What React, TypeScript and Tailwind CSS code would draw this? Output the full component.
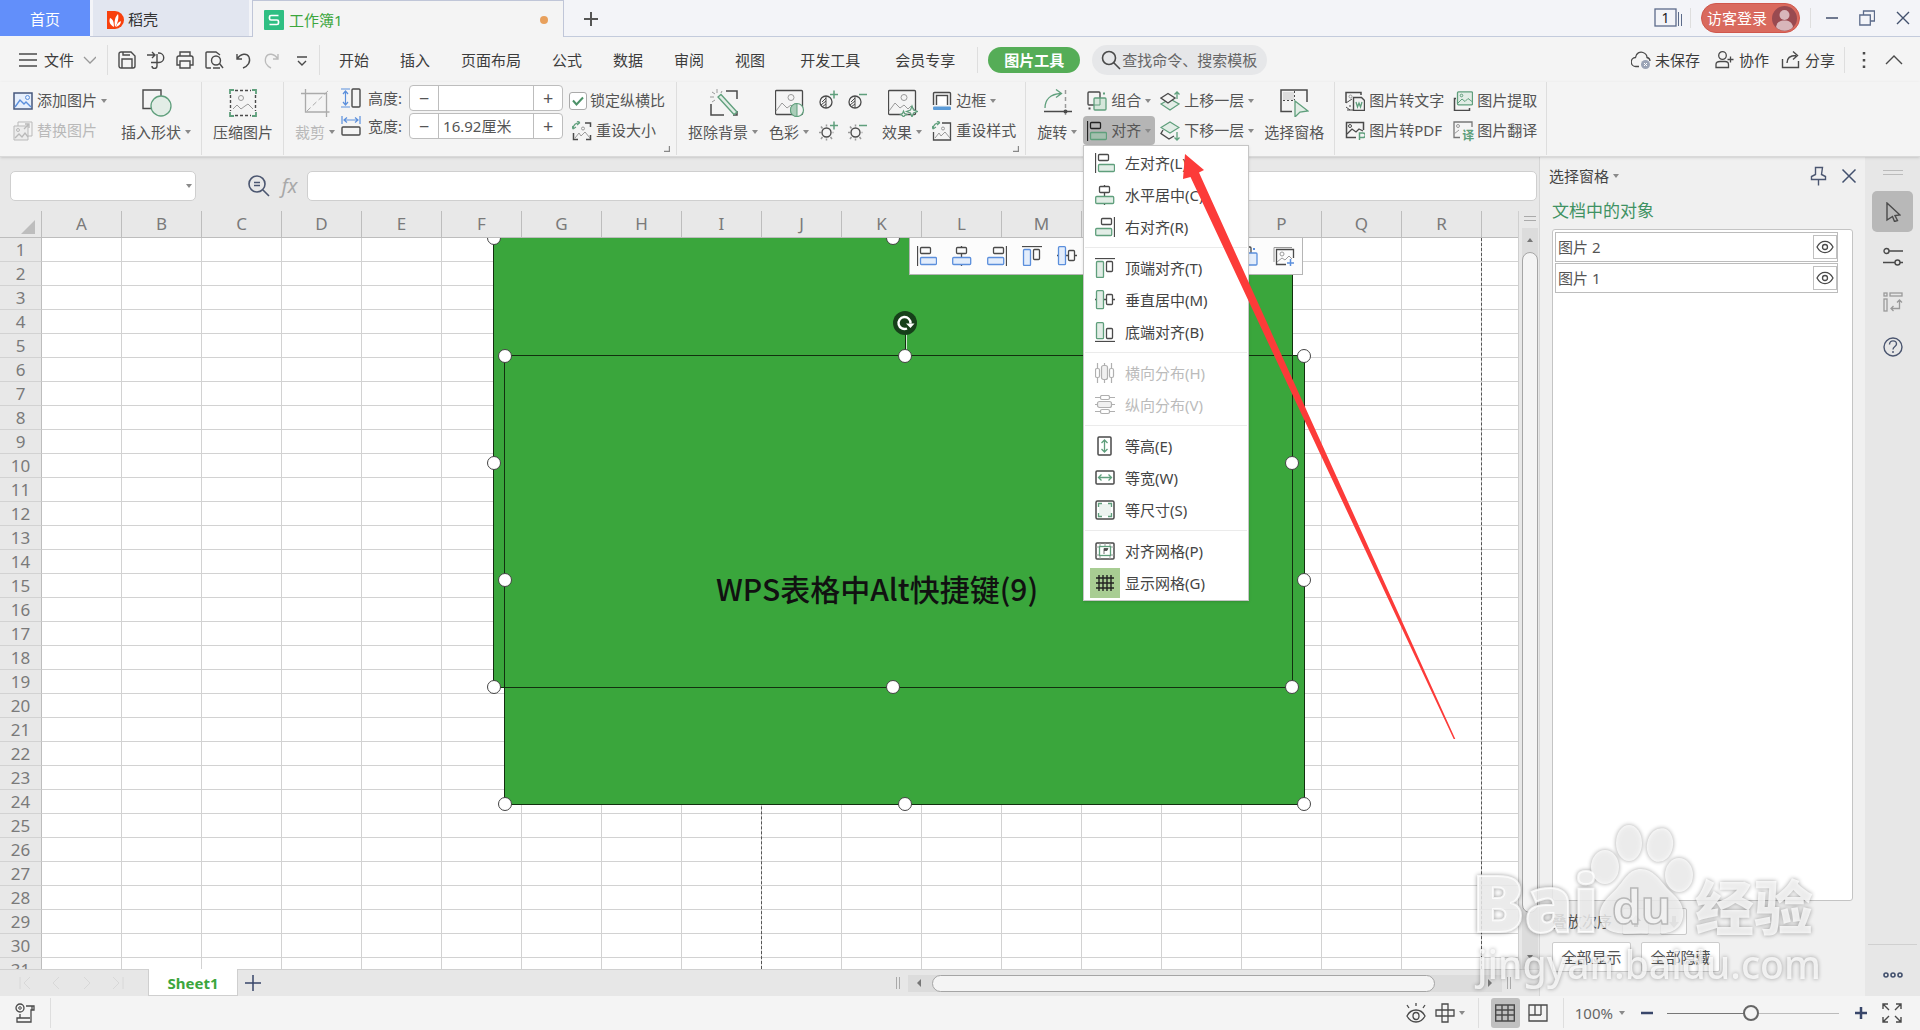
import React from "react";

type Kids = { children?: React.ReactNode };

const D = "#4a4a4a";
const G = "#5f9f7c";
const GF = "#e2ede6";
const L = "#9a9a9a";
const B = "#5b8fdc";

function Svg({ w = 20, h = 20, children }: Kids & { w?: number; h?: number }) {
  return (
    <svg width={w} height={h} viewBox={`0 0 ${w} ${h}`} fill="none" stroke={D} className="shrink-0" aria-hidden="true">
      {children}
    </svg>
  );
}

const Caret = () => (
  <svg width="8" height="4" viewBox="0 0 8 4" className="ml-[3px] shrink-0" aria-hidden="true">
    <path d="M1 0h6L4 4z" fill="#8a8a8a" />
  </svg>
);

const Rule = ({ className = "" }: { className?: string }) => <div className={`w-px shrink-0 bg-[#dedede] ${className}`} />;

function Big({ icon, label, caret, className = "" }: { icon: React.ReactNode; label: string; caret?: boolean; className?: string }) {
  return (
    <button className={`flex shrink-0 flex-col items-center pt-[7px] ${className}`}>
      {icon}
      <span className="mt-[5px] flex h-5 items-center">
        {label}
        {caret && <Caret />}
      </span>
    </button>
  );
}

function Small({ icon, label, caret, className = "" }: { icon: React.ReactNode; label: string; caret?: boolean; className?: string }) {
  return (
    <button className={`flex h-[29px] items-center gap-1 rounded ${className}`}>
      {icon}
      <span className="flex items-center">
        {label}
        {caret && <Caret />}
      </span>
    </button>
  );
}

const Stack = ({ children, className = "" }: Kids & { className?: string }) => (
  <div className={`flex shrink-0 flex-col gap-px pt-1 ${className}`}>{children}</div>
);

/* ---------- alignment icons ---------- */
type Tone = { a: string; b: string; f: string };
const GREEN: Tone = { a: D, b: G, f: GF };
const BLUE: Tone = { a: D, b: B, f: "#e3edfb" };

const AlignLeft = ({ t = GREEN }: { t?: Tone }) => (
  <Svg><path d="M.5 0v20" stroke={t.a} strokeWidth="1.300" /><rect x="3.500" y="1.500" width="10" height="6" rx="1" stroke={t.a} strokeWidth="1.300" /><rect x="3.500" y="11.500" width="16" height="7" rx="1" stroke={t.b} fill={t.f} strokeWidth="1.300" /></Svg>
);
const AlignCenter = ({ t = GREEN }: { t?: Tone }) => (
  <Svg><path d="M9.500 0v2M9.500 8v4M9.500 18v2" stroke={t.a} strokeWidth="1.300" /><rect x="4.500" y="1.500" width="10" height="6" rx="1" stroke={t.a} strokeWidth="1.300" /><rect x=".7" y="11.500" width="18" height="7" rx="1" stroke={t.b} fill={t.f} strokeWidth="1.300" /></Svg>
);
const AlignRight = ({ t = GREEN }: { t?: Tone }) => (
  <Svg><path d="M19.500 0v20" stroke={t.a} strokeWidth="1.300" /><rect x="6.500" y="1.500" width="10" height="6" rx="1" stroke={t.a} strokeWidth="1.300" /><rect x=".7" y="11.500" width="16" height="7" rx="1" stroke={t.b} fill={t.f} strokeWidth="1.300" /></Svg>
);
const AlignTop = ({ t = GREEN }: { t?: Tone }) => (
  <Svg><path d="M0 .5h20" stroke={t.a} strokeWidth="1.300" /><rect x="1.500" y="3.500" width="7" height="16" rx="1" stroke={t.b} fill={t.f} strokeWidth="1.300" /><rect x="11.500" y="3.500" width="6" height="10" rx="1" stroke={t.a} strokeWidth="1.300" /></Svg>
);
const AlignMiddle = ({ t = GREEN }: { t?: Tone }) => (
  <Svg><path d="M0 9.500h2M8 9.500h3M18 9.500h2" stroke={t.a} strokeWidth="1.300" /><rect x="1.500" y=".7" width="7" height="18" rx="1" stroke={t.b} fill={t.f} strokeWidth="1.300" /><rect x="11.500" y="4.500" width="6" height="10" rx="1" stroke={t.a} strokeWidth="1.300" /></Svg>
);
const AlignBottom = () => (
  <Svg><g strokeWidth="1.300"><path d="M0 19.500h20" /><rect x="1.500" y=".7" width="7" height="16" rx="1" stroke={G} fill={GF} /><rect x="11.500" y="6.500" width="6" height="10" rx="1" /></g></Svg>
);
const DistH = () => (
  <Svg><g stroke="#b0b0b0" strokeWidth="1.200"><path d="M2.500 0v5M2.500 14v6M9.500 0v3M9.500 17v3M16.500 0v5M16.500 14v6" /><rect x=".5" y="5.500" width="4" height="9" rx="1.500" /><rect x="6.500" y="2.500" width="6" height="14" rx="2" fill="#f0f0f0" /><rect x="14.500" y="5.500" width="4" height="9" rx="1.500" /></g></Svg>
);
const DistV = () => (
  <Svg><g stroke="#b0b0b0" strokeWidth="1.200"><path d="M0 2.500h5M14 2.500h6M0 9.500h3M17 9.500h3M0 16.500h5M14 16.500h6" /><rect x="5.500" y=".5" width="9" height="4" rx="1.500" /><rect x="2.500" y="6.500" width="14" height="6" rx="2" fill="#f0f0f0" /><rect x="5.500" y="14.500" width="9" height="4" rx="1.500" /></g></Svg>
);
const EqualH = () => (
  <Svg><rect x="3" y="1" width="13" height="18" rx="1" strokeWidth="1.500" /><path d="M9.500 4v12M6.500 7l3-3 3 3M6.500 13l3 3 3-3" stroke={G} strokeWidth="1.300" /></Svg>
);
const EqualW = () => (
  <Svg><rect x="1" y="3" width="18" height="13" rx="1" strokeWidth="1.500" /><path d="M3.500 9.500h13M6.500 6.500l-3 3 3 3M13.500 6.500l3 3-3 3" stroke={G} strokeWidth="1.300" /></Svg>
);
const EqualSize = () => (
  <Svg><rect x="1" y="1" width="18" height="18" rx="1.500" strokeWidth="1.500" /><rect x="4" y="4" width="12" height="12" fill="#edf4f0" stroke="none" /><path d="M3.500 7V3.500H7M13 3.500h3.500V7M16.500 13v3.500H13M7 16.500H3.500V13" stroke={G} strokeWidth="1.300" /></Svg>
);
const SnapGrid = () => (
  <Svg><rect x="1" y="2" width="18" height="16" rx="1" strokeWidth="1.500" /><path d="M1 6h18M1 14h18M5 2v16M10 2v3M15 2v16" stroke={L} /><rect x="4.500" y="5.500" width="11" height="9" stroke={G} fill="#fff" strokeWidth="1.300" /><path d="M9 13V7.500h4l-1 2H9" fill={D} strokeWidth=".8" /></Svg>
);
const ShowGrid = () => (
  <Svg><path d="M4 2v16M8 2v16M12 2v16M16 2v16M1 5h18M1 10h18M1 15h18" stroke="#222" strokeWidth="1.400" /></Svg>
);

/* ---------- ribbon icons ---------- */
const Photo = () => (
  <g><rect x=".5" y="1.500" width="27" height="24" rx="1" strokeWidth="1.300" /><circle cx="16" cy="8.500" r="3" stroke={L} /><path d="M1 22l6-8 5 5 4-3 4 4 3-3 4 4" stroke={L} /></g>
);
const ResetIcon = ({ solid = false }: { solid?: boolean }) => (
  <Svg><path d="M1 8c0-4 3-6.500 7-6.500M8 1.500L5 0M8 1.500L5 4M1 8l-1-3M1 8l3-2" stroke={G} strokeWidth="1.200" />{solid ? <path d="M10 2h8.500v17H1.500v-8" strokeWidth="1.300" /> : <path d="M13 2h5.500v4M18.500 14v4.500H14M6 18.500H1.500V12" strokeWidth="1.500" />}<circle cx="11" cy="7.500" r="1.500" stroke={L} /><path d="M3 17l4-5 2 3 4-4 5 6" stroke={L} /></Svg>
);
const Contrast = ({ plus }: { plus?: boolean }) => (
  <Svg w={19}><circle cx="7" cy="12" r="6" strokeWidth="1.300" /><path d="M7 6v12M7 8l-4 4M7 11l-5 4M7 14l-4 3" /><path d={plus ? "M11 4.500h8M15 .5v8" : "M11 4.500h8"} stroke={G} strokeWidth="1.500" /></Svg>
);
const Sun = ({ plus }: { plus?: boolean }) => (
  <Svg w={19}><circle cx="7.500" cy="11.500" r="4.500" strokeWidth="1.400" /><path d="M2 5.500l1.500 2M7.500 3.500v2M0 11.500h2M2 18l1.500-2M7.500 17.500v2M13 18l-1.500-2M13.500 11.500h1" stroke={L} strokeWidth="1.500" /><path d={plus ? "M11 4.500h8M15 .5v8" : "M11 4.500h8"} stroke={G} strokeWidth="1.500" /></Svg>
);
const Layers = ({ up }: { up?: boolean }) =>
  up ? (
    <Svg><path d="M1 13l9-5 9 5-9 6z" stroke={G} fill={GF} strokeWidth="1.200" /><path d="M1 7l7-4.500L15 7l-7 5z" fill="#f3f3f3" strokeWidth="1.400" /><path d="M17 8V1M14.500 3.500L17 1l2.500 2.500" stroke={G} strokeWidth="1.300" /></Svg>
  ) : (
    <Svg><path d="M3 9l-2 3.500L9 18l5-3" strokeWidth="1.400" /><path d="M1 6.500L10 1l9 5.500-9 5.500z" stroke={G} fill={GF} strokeWidth="1.200" /><path d="M17 11v8M14.500 16.500L17 19l2.500-2.500" stroke={G} strokeWidth="1.300" /></Svg>
  );

const Convert = ({ kind }: { kind: "word" | "pdf" | "extract" | "trans" }) => {
  if (kind === "word")
    return <Svg><path d="M1 12V1.500h15V4" strokeWidth="1.500" /><circle cx="5.500" cy="5.500" r="1.500" stroke={L} /><path d="M1 12l6-4M1 16l4 3M2 19h6M5 16v-2" /><path d="M8.500 6.500h8l3 3v10h-11z" fill="#f3f3f3" strokeWidth="1.400" /><path d="M11 11l1.500 5 1.500-4 1.500 4 1.500-5" stroke={G} strokeWidth="1.300" /></Svg>;
  if (kind === "pdf")
    return <Svg><path d="M11 16.500H1.500v-15h17V9" strokeWidth="1.500" /><circle cx="5" cy="5" r="1.500" /><path d="M2 13l5-5 4 3 3-3 4 2" strokeWidth="1.300" /><path d="M14.500 19v-7h3.500a2 2 0 010 4.500h-3.500" stroke={G} strokeWidth="1.500" /></Svg>;
  if (kind === "extract")
    return <Svg><path d="M3 7.500H1.500v12h15V17" strokeWidth="1.500" /><rect x="4.500" y=".8" width="15" height="13" rx="1" stroke={G} fill={GF} strokeWidth="1.300" /><circle cx="8.500" cy="4.500" r="1.300" stroke={G} /><path d="M5 12l4-4 3 2.500 3-3 4 3" stroke={G} /></Svg>;
  return (
    <span className="relative block h-5 w-5 shrink-0">
      <Svg><path d="M7 16.500H1V1h18v5" stroke="#777" strokeWidth="1.300" /><circle cx="5" cy="5" r="1.500" stroke={L} /><path d="M1 13l5-4" stroke={L} /></Svg>
      <span className="absolute -right-px -bottom-px text-xs leading-3 font-bold text-[#5f9f7c]">译</span>
    </span>
  );
};

function Stepper({ id, value }: { id: string; value: string }) {
  return (
    <div className="flex h-[26px] w-[154px] overflow-hidden rounded-[4px] border border-[#bdbdbd] bg-white">
      <button aria-label="减小" className="w-7 shrink-0 text-center text-lg leading-6 text-[#555]">−</button>
      <input id={id} defaultValue={value} className="min-w-0 flex-1 border-x border-[#bdbdbd] px-1 text-[15px] text-[#555] outline-none" />
      <button aria-label="增大" className="w-7 shrink-0 text-center text-lg leading-6 text-[#555]">+</button>
    </div>
  );
}

/* ---------- title bar ---------- */
function TitleBar() {
  return (
    <header className="flex h-[37px] shrink-0 bg-[#f3f4f8] text-[15px]">
      <button className="mb-px w-[90px] bg-[#628ffa] pt-[3px] text-white">首页</button>
      <div className="w-[3px] border-b border-[#c3c9d9]" />
      <button className="flex w-[156px] items-center gap-1 border-b border-[#c3c9d9] bg-[#e2e6f0] pt-[3px] pl-[13px] text-[#333]">
        <Svg w={18}><path d="M1 1h8a9 9 0 010 18H1z" fill="#f8400d" stroke="none" /><path d="M8 17C3 14 3 11 4 8c3 1 4 4 4 9zM9 17c-1-6 0-10 3-13 1 3 0 9-3 13zM10 17c1-4 3-5 5-6 0 3-2 5-5 6z" fill="#fff" stroke="none" /></Svg>
        稻壳
      </button>
      <div className="w-[3px] border-b border-[#c3c9d9]" />
      <button className="flex w-[312px] items-center gap-[5px] border border-b-0 border-[#c0c6d8] bg-[#f4f4f4] pt-[2px] pl-[11px] text-[#3ca63d]">
        <Svg><rect width="20" height="20" rx="1" fill="#2fbf83" stroke="none" /><path d="M14.500 5.500H7a1.500 1.500 0 00-1.500 1.500v1.500A1.500 1.500 0 007 10h6a1.500 1.500 0 011.500 1.500V13a1.500 1.500 0 01-1.500 1.500H5.500" stroke="#fff" strokeWidth="1.700" /></Svg>
        工作簿1
        <span className="mr-[15px] ml-auto h-2 w-2 rounded-full bg-[#e8a05c]" />
      </button>
      <div className="flex flex-1 items-center border-b border-[#c3cbdc] pl-[19px]">
        <button aria-label="新建" className="pt-[2px]"><Svg w={16} h={16}><path d="M8 1v14M1 8h14" stroke="#555" strokeWidth="2" /></Svg></button>
        <div className="ml-auto flex items-center pr-[9px]">
          <Svg w={28}><rect x="1" y="1" width="21" height="17" stroke="#5c6b8a" strokeWidth="1.300" /><path d="M24.500 4v14M27.500 6v12" stroke="#5c6b8a" /><text x="11.500" y="15" fontSize="14" textAnchor="middle" fill="#222" stroke="none">1</text></Svg>
          <Rule className="mx-[8px] h-5" />
          <button className="ml-[2px] flex h-[30px] w-[99px] items-center justify-between rounded-full border border-[#d0574c] bg-[#d96a5e] pr-[2px] pl-[5px] text-white">
            访客登录
            <svg width="25" height="25" viewBox="0 0 25 25" aria-hidden="true"><circle cx="12.500" cy="12.500" r="12.500" fill="#994a50" /><circle cx="12.500" cy="9" r="5" fill="#d8b6ba" /><path d="M4 21c1-5 4-6.500 8.500-6.500S20 16 21 21c-4 5-13 5-17 0z" fill="#d8b6ba" /></svg>
          </button>
          <Rule className="mx-[10px] h-5" />
          <button aria-label="最小化" className="ml-[3px]"><Svg w={16} h={16}><path d="M2 8h12" stroke="#43516e" strokeWidth="1.500" /></Svg></button>
          <button aria-label="还原" className="ml-[19px]"><Svg w={16} h={16}><path d="M4.500 5V1h11v10h-4M.8 5h10.500v10H.8z" stroke="#5c6b8a" strokeWidth="1.300" /></Svg></button>
          <button aria-label="关闭" className="ml-5"><Svg w={16} h={16}><path d="M2 2l12 12M14 2L2 14" stroke="#43516e" strokeWidth="1.400" /></Svg></button>
        </div>
      </div>
    </header>
  );
}

const QUICK: [string, React.ReactNode][] = [
  ["保存", <Svg w={18} h={18} key="s"><path d="M1 3a2 2 0 012-2h10l4 4v10a2 2 0 01-2 2H3a2 2 0 01-2-2z" strokeWidth="1.400" /><path d="M5 1v3h7M4 17V8h10v9" strokeWidth="1.400" /></Svg>],
  ["输出", <Svg w={18} h={18} key="o"><path d="M0 4h8M5 1l3 3-3 3M11 2h1a4.500 4.500 0 010 9.500H4M10 3v12a2.500 2.500 0 01-5 0" strokeWidth="1.400" /></Svg>],
  ["打印", <Svg w={18} h={18} key="p"><path d="M4 5V1h10v4M4 14H1V7a2 2 0 012-2h12a2 2 0 012 2v7h-3M4 10h10v7H4z" strokeWidth="1.400" /></Svg>],
  ["预览", <Svg w={19} h={18} key="v"><path d="M6 17H2a1 1 0 01-1-1V2a1 1 0 011-1h9l4 3M8 17h7" strokeWidth="1.400" /><circle cx="11" cy="9.500" r="4.500" strokeWidth="1.400" /><path d="M14.500 12.500L18 17" strokeWidth="1.400" /></Svg>],
];

const TABS = ["开始", "插入", "页面布局", "公式", "数据", "审阅", "视图"];

function MenuBar() {
  return (
    <nav className="flex h-[45px] shrink-0 items-center bg-[#f4f4f4] pt-px pr-[17px] pl-[19px] text-[15px] text-[#3c3c3c]">
      <button className="flex items-center">
        <Svg w={18} h={14}><path d="M0 1h18M0 7h18M0 13h18" strokeWidth="1.500" /></Svg>
        <span className="ml-[7px]">文件</span>
        <Svg w={22} h={8}><path d="M10 1l6 6 6-6" stroke="#999" strokeWidth="1.300" /></Svg>
      </button>
      <Rule className="ml-[11px] h-[30px]" />
      <div className="ml-[10px] flex items-center gap-[11px]">
        {QUICK.map(([n, i]) => <button key={n} aria-label={n}>{i}</button>)}
        <button aria-label="撤销"><Svg w={18} h={18}><path d="M2 3v5h5M2 8c4-6 10-6 12-2 2 5-1 9-6 11" strokeWidth="1.400" /></Svg></button>
        <button aria-label="恢复"><Svg w={18} h={18}><path d="M14 3v5H9M14 8C10 2 4 2 2 6c-2 5 1 9 5 11" stroke="#bbb" strokeWidth="1.400" /></Svg></button>
        <button aria-label="更多"><Svg w={18} h={18}><path d="M4 6h10M5 10l4 4 4-4" strokeWidth="1.400" /></Svg></button>
      </div>
      <Rule className="ml-[8px] h-[30px]" />
      <div className="ml-[19px] flex gap-[31px]">
        {TABS.map((t) => <button key={t}>{t}</button>)}
      </div>
      <div className="ml-[35px] flex gap-[35px]">
        <button>开发工具</button>
        <button>会员专享</button>
      </div>
      <Rule className="ml-[22px] h-[26px]" />
      <button className="ml-[10px] h-[26px] w-[92px] rounded-full bg-[#55ad57] font-bold text-white">图片工具</button>
      <label className="ml-3 flex h-[30px] w-[175px] items-center rounded-full bg-[#e6e7e9] pl-[9px]">
        <Svg><circle cx="8" cy="8" r="6.500" strokeWidth="1.600" /><path d="M12.500 12.500L19 19" strokeWidth="1.600" /></Svg>
        <input aria-label="搜索" placeholder="查找命令、搜索模板" className="w-[140px] bg-transparent pl-px outline-none placeholder:text-[#666] placeholder:opacity-100" />
      </label>
      <div className="ml-auto flex items-center">
        <button className="flex items-center gap-1">
          <Svg><path d="M8 16.500H5a4.500 4.500 0 01-.5-9C5 3 9 1.500 12 2.500s4 3 4 5c2 .5 3 2 3 3.500" strokeWidth="1.300" /><circle cx="14.500" cy="14.500" r="4.500" fill="#9aa3b5" stroke="none" /><path d="M13 13l3 3M16 13l-3 3" stroke="#fff" /></Svg>未保存
        </button>
        <button className="ml-[15px] flex items-center gap-1">
          <Svg><circle cx="7.500" cy="5.500" r="3.800" strokeWidth="1.300" /><path d="M1 17.500v-3c0-2 1.500-3 4-3h5c2 0 3.500 1 3.500 3v3zM12.500 9.500h6M15.500 6.500v6" strokeWidth="1.300" /></Svg>协作
        </button>
        <button className="ml-3 flex items-center gap-1">
          <Svg><path d="M1.500 9v8.500h16V11" strokeWidth="1.400" /><path d="M6 13c0-5 3-7.500 9-7.500M12 1.500l4.500 4-4.500 4" strokeWidth="1.400" /></Svg>分享
        </button>
        <Rule className="ml-[9px] h-[26px]" />
        <button aria-label="更多选项" className="ml-[14px]"><Svg w={10}><path d="M5 2v2.500M5 9v2.500M5 15.500V18" strokeWidth="2.500" /></Svg></button>
        <button aria-label="收起功能区" className="ml-4"><Svg w={18} h={10}><path d="M1 9l8-8 8 8" strokeWidth="1.400" /></Svg></button>
      </div>
    </nav>
  );
}

const Launcher = () => (
  <button aria-label="更多设置" className="absolute right-[6px] bottom-[4px]"><Svg w={6} h={6}><path d="M5.500 0v5.500H0" stroke="#888" strokeWidth="1.400" /></Svg></button>
);

/* ---------- ribbon ---------- */
function Ribbon() {
  return (
    <section className="relative z-10 flex h-[75px] shrink-0 border-b border-[#d9d9d9] bg-[#f4f4f4] pl-[13px] text-[15px] whitespace-nowrap text-[#555] shadow-sm">
      <Stack>
        <Small caret label="添加图片" icon={<Svg><rect x="1" y="2" width="18" height="16" fill="#e6effc" stroke="#45577c" strokeWidth="1.500" /><circle cx="14.500" cy="6.500" r="2" stroke={B} /><path d="M2 16l5-7 4 4 2-2 5 5" stroke={B} strokeWidth="1.400" /></Svg>} />
        <Small className="text-[#b9b9b9]" label="替换图片" icon={<Svg><g stroke="#b9b9b9"><path d="M5 5V1h14v14h-4" /><path d="M1 5h14v14H1z" fill="#ececec" /><circle cx="5" cy="9" r="1.500" /><path d="M2 17l4-4 3 3 3-4 3 4M11 8l5-5M12 3h4v4" strokeWidth="1.300" /></g></Svg>} />
      </Stack>
      <Big className="ml-[13px]" caret label="插入形状" icon={<Svg w={30} h={28}><path d="M9 19.500H1V1h18v6" strokeWidth="1.400" /><circle cx="19" cy="17" r="10" stroke={G} fill={GF} strokeWidth="1.300" /></Svg>} />
      <Rule className="ml-[9px] h-[73px]" />
      <Big className="ml-[11px]" label="压缩图片" icon={<Svg w={28} h={28}><path d="M6 1.500h16M6 26.500h16M1.500 6v16M26.500 6v16" strokeDasharray="3 2" strokeWidth="1.400" /><path d="M1 5V1h4M23 1h4v4M27 23v4h-4M5 27H1v-4" stroke={G} strokeWidth="1.800" /><circle cx="12" cy="9" r="2.500" stroke={L} /><path d="M4 20l4-4 4 4 4-3 3-2 5 5" stroke={L} /></Svg>} />
      <Rule className="ml-[10px] h-[73px]" />
      <Big className="ml-[11px] text-[#b9b9b9]" caret label="裁剪" icon={<Svg w={30} h={28}><g stroke="#aaa"><path d="M0 4.500h26M4.500 0v23h24M25.500 4v24" strokeWidth="1.300" /><path d="M6 22L29 0" strokeDasharray="5 3" /></g></Svg>} />
      <div className="ml-[5px] flex shrink-0 flex-col gap-[2px] pt-[3px]">
        <div className="flex items-center">
          <Svg><path d="M0 1h9M0 19h9M4.500 3v14M2 6l2.500-3L7 6M2 14l2.500 3L7 14" stroke={B} strokeWidth="1.200" /><rect x="11" y="1" width="8" height="18" rx="1" strokeWidth="1.400" /></Svg>
          <label htmlFor="pic-h" className="w-[41px] pl-[7px]">高度:</label>
          <span className="ml-[7px]"><Stepper id="pic-h" value="" /></span>
        </div>
        <div className="flex items-center">
          <Svg><path d="M1 0v8M19 0v8M3 4h14M6 1.500L3 4l3 2.500M14 1.500L17 4l-3 2.500" stroke={B} strokeWidth="1.200" /><rect x="1" y="11" width="18" height="8" rx="1" strokeWidth="1.400" /></Svg>
          <label htmlFor="pic-w" className="w-[41px] pl-[7px]">宽度:</label>
          <span className="ml-[7px]"><Stepper id="pic-w" value="16.92厘米" /></span>
        </div>
      </div>
      <div className="relative flex shrink-0 pr-[11px]">
        <Stack className="ml-[6px]">
          <label className="flex h-[29px] items-center gap-[3px]">
            <span className="relative h-[18px] w-[18px]">
              <input type="checkbox" defaultChecked className="peer block h-[18px] w-[18px] appearance-none rounded-[3px] border border-[#aaa] bg-white" />
              <svg viewBox="0 0 18 18" fill="none" className="pointer-events-none absolute inset-0 hidden peer-checked:block" aria-hidden="true"><path d="M4 8.500l3.500 4L14 5.500" stroke="#4c9168" strokeWidth="2" /></svg>
            </span>
            锁定纵横比
          </label>
          <Small className="pl-[3px]" label="重设大小" icon={<ResetIcon />} />
        </Stack>
        <Launcher />
      </div>
      <Rule className="h-[73px]" />
      <Big className="ml-[11px]" caret label="抠除背景" icon={<Svg w={28} h={28}><path d="M16 2h11v8M1 15v11h13M27 22v4h-4" strokeWidth="1.500" /><path d="M8 8l3-2.500L27 23l-3 2.500z" stroke={G} fill={GF} strokeWidth="1.300" /><path d="M7 0v4M2 3l3 2M0 8h4M2 13l3-2M12 2l-1 2" stroke={L} /></Svg>} />
      <Big className="ml-[10px]" caret label="色彩" icon={<Svg w={30} h={28}><Photo /><circle cx="22" cy="21" r="6.500" fill="#f4f4f4" stroke={G} strokeWidth="1.200" /><path d="M22 14.500a6.500 6.500 0 000 13z" fill="#a9cdb8" stroke={G} /></Svg>} />
      <div className="ml-[9px] grid shrink-0 grid-cols-2 content-start gap-x-[10px] gap-y-[11px] pt-2">
        <button aria-label="增加对比度"><Contrast plus /></button>
        <button aria-label="降低对比度"><Contrast /></button>
        <button aria-label="增加亮度"><Sun plus /></button>
        <button aria-label="降低亮度"><Sun /></button>
      </div>
      <Big className="ml-[15px]" caret label="效果" icon={<Svg w={30} h={28}><Photo /><path d="M24 17l1.500 4 4 1.500-4 1.500-1.500 4-1.500-4-4-1.500 4-1.500zM15.500 22l1 2.500 2.500 1-2.500 1-1 2-1-2-2-1 2-1z" fill="#f4f4f4" stroke={G} strokeWidth="1.200" /></Svg>} />
      <div className="relative flex shrink-0 pr-[9px]">
        <Stack className="ml-[9px]">
          <Small caret label="边框" icon={<Svg><rect x="1.500" y="1.500" width="17" height="14" rx="1" strokeWidth="1.400" /><rect x="4.500" y="4.500" width="11" height="11" fill="#fff" strokeWidth="1.400" /><rect x="0" y="14" width="20" height="6" fill="#f4f4f4" stroke="none" /><rect x="1" y="15.500" width="18" height="3.500" rx="1" fill="#5b9bd8" stroke="none" /></Svg>} />
          <Small label="重设样式" icon={<ResetIcon solid />} />
        </Stack>
        <Launcher />
      </div>
      <Rule className="h-[73px]" />
      <Big className="ml-[11px]" caret label="旋转" icon={<Svg w={28} h={28}><path d="M1 19C1 11 6 5 17 4.500M12 .5l5.500 4-5.500 4" stroke={G} strokeWidth="1.300" /><path d="M0 22.500h28" strokeWidth="1.500" /><path d="M21.500 1v28" stroke={L} strokeDasharray="4 3" strokeWidth="1.500" /><circle cx="21.500" cy="22.500" r="2" fill={D} stroke="none" /></Svg>} />
      <Stack className="ml-[5px]">
        <Small className="w-[72px] pl-1" caret label="组合" icon={<Svg><rect x="1" y="1" width="12" height="13" rx="1" strokeWidth="1.400" /><rect x="7" y="7" width="12" height="12" rx="1" stroke={G} fill="#d5e6db" strokeWidth="1.300" /><path d="M7 14h6V7" stroke={G} /><path d="M16 2.500h2" stroke={G} strokeWidth="2" /><path d="M1.500 17.500h2" strokeWidth="2" /></Svg>} />
        <Small className="w-[72px] bg-[#b5b5b5] pl-1" caret label="对齐" icon={<AlignLeft t={{ a: "#222", b: G, f: "#a3bfae" }} />} />
      </Stack>
      <Stack className="ml-[5px]">
        <Small caret label="上移一层" icon={<Layers up />} />
        <Small caret label="下移一层" icon={<Layers />} />
      </Stack>
      <Big className="ml-[9px]" label="选择窗格" icon={<Svg w={29} h={28}><path d="M12 22.500H1V1h26v12" strokeWidth="1.500" /><path d="M3 3h11v8H3z" fill="#ddd" stroke="none" /><path d="M14.500 2v9M3 11.500h11" strokeDasharray="2 2" /><path d="M15 12l13 10-8 1-5 5z" stroke={G} fill={GF} strokeWidth="1.300" /></Svg>} />
      <Rule className="ml-[10px] h-[73px]" />
      <Stack className="ml-[10px]">
        <Small label="图片转文字" icon={<Convert kind="word" />} />
        <Small label="图片转PDF" icon={<Convert kind="pdf" />} />
      </Stack>
      <Stack className="ml-[9px]">
        <Small label="图片提取" icon={<Convert kind="extract" />} />
        <Small label="图片翻译" icon={<Convert kind="trans" />} />
      </Stack>
      <Rule className="ml-[9px] h-[73px]" />
      <AlignMenu />
    </section>
  );
}

const MENU: [React.ReactNode, string, string?][][] = [
  [[<AlignLeft />, "左对齐(L)"], [<AlignCenter />, "水平居中(C)"], [<AlignRight />, "右对齐(R)"]],
  [[<AlignTop />, "顶端对齐(T)"], [<AlignMiddle />, "垂直居中(M)"], [<AlignBottom />, "底端对齐(B)"]],
  [[<DistH />, "横向分布(H)", "off"], [<DistV />, "纵向分布(V)", "off"]],
  [[<EqualH />, "等高(E)"], [<EqualW />, "等宽(W)"], [<EqualSize />, "等尺寸(S)"]],
  [[<SnapGrid />, "对齐网格(P)"], [<ShowGrid />, "显示网格(G)", "on"]],
];

function AlignMenu() {
  return (
    <div role="menu" className="absolute top-[63px] left-[1083px] w-[166px] border border-[#c6c6c6] bg-white pt-px pb-px text-[15px] text-[#444] shadow-sm">
      {MENU.map((group, g) => (
        <div key={g}>
          {g > 0 && <div className="mx-px my-1 h-px bg-[#ebebeb]" />}
          {group.map(([icon, label, state]) => (
            <button key={label} role="menuitem" disabled={state === "off"} className="flex h-8 w-full items-center pl-[6px] disabled:text-[#bbb]">
              <span className={state === "on" ? "flex h-[30px] w-[30px] items-center justify-center bg-[#a8cd93]" : "flex h-[30px] w-[30px] items-center justify-center"}>{icon}</span>
              <span className="ml-[5px]">{label}</span>
            </button>
          ))}
        </div>
      ))}
    </div>
  );
}

/* ---------- sheet ---------- */
function FormulaBar() {
  return (
    <div className="flex h-[54px] shrink-0 items-center pt-1 pr-[2px] pl-[10px]">
      <div className="flex h-[30px] w-[186px] items-center rounded-[5px] border border-[#cfcfcf] bg-white pr-[2px]">
        <input aria-label="名称框" className="min-w-0 flex-1 bg-transparent px-2 outline-none" />
        <Caret />
      </div>
      <button aria-label="函数查找" className="ml-[52px]"><Svg w={22} h={22}><circle cx="9" cy="9" r="8" stroke="#4b5670" strokeWidth="1.600" /><path d="M15 15l6 6M6 7.500h6M6 10.500h6" stroke="#4b5670" strokeWidth="1.600" /></Svg></button>
      <button className="ml-[10px] w-[19px] font-['Noto_Sans'] text-xl leading-6 text-[#a8a8a8] italic">fx</button>
      <input aria-label="编辑栏" className="ml-2 h-[30px] min-w-0 flex-1 rounded-[5px] border border-[#cfcfcf] bg-white px-2 outline-none" />
    </div>
  );
}

const COLS = "ABCDEFGHIJKLMNOPQR".split("").concat("");
const ROWS = Array.from({ length: 31 }, (_, i) => i + 1);

const Handle = ({ className }: { className: string }) => (
  <span className={`absolute h-[14px] w-[14px] -translate-x-1/2 -translate-y-1/2 rounded-full border border-[#444] bg-white ${className}`} />
);

function Grid() {
  return (
    <div className="relative min-w-0 flex-1 overflow-hidden border-r border-[#cfcfcf] bg-white">
      <table className="w-[1562px] table-fixed border-separate border-spacing-0 text-[17px] text-[#7a7a7a]">
        <thead>
          <tr className="h-[27px]">
            <th className="w-[42px] border-r border-b border-[#bdbdbd] bg-[#e8e8e8] p-0">
              <svg width="14" height="14" viewBox="0 0 14 14" className="mt-[6px] ml-[21px]" aria-hidden="true"><path d="M14 0v14H0z" fill="#bdbdbd" /></svg>
            </th>
            {COLS.map((c) => <th key={c} className="w-20 border-r border-b border-[#bdbdbd] bg-[#e8e8e8] p-0 leading-6 font-normal">{c}</th>)}
          </tr>
        </thead>
        <tbody>
          {ROWS.map((r) => (
            <tr key={r} className="h-6">
              <th className="border-r border-b border-[#bdbdbd] border-b-[#d2d2d2] bg-[#e8e8e8] p-0 leading-[23px] font-normal">{r}</th>
              {COLS.map((c) => <td key={c} className="border-r border-b border-[#d2d2d2] p-0" />)}
            </tr>
          ))}
        </tbody>
      </table>
      <div className="absolute top-[27px] bottom-0 left-[1481px] border-l border-dashed border-[#555]" />
      <div className="absolute top-[27px] bottom-0 left-[761px] border-l border-dashed border-[#555]" />
      {/* canvas objects */}
      <div className="absolute inset-x-0 top-[27px] bottom-0 overflow-hidden">
        <div className="absolute top-[-1px] left-[493px] h-[451px] w-[800px] border border-[#12300f] bg-[#3aa63c]" />
        <div className="absolute top-[117px] left-[504px] h-[450px] w-[801px] border border-[#12300f] bg-[#3aa63c]">
          <p className="absolute top-[212px] left-[211px] font-['Noto_Sans_CJK_SC','Noto_Sans',sans-serif] text-[30px] leading-10 font-medium whitespace-nowrap text-[#111]">WPS表格中Alt快捷键(9)</p>
          <div className="absolute -top-[22px] left-1/2 h-[22px] w-[2px] border-l border-[#12300f] bg-[#cfe8d0]" />
          <Handle className="top-0 left-0" /><Handle className="top-0 left-1/2" /><Handle className="top-0 left-full" />
          <Handle className="top-1/2 left-0" /><Handle className="top-1/2 left-full" />
          <Handle className="top-full left-0" /><Handle className="top-full left-1/2" /><Handle className="top-full left-full" />
          <svg width="24" height="24" viewBox="0 0 24 24" fill="none" className="absolute -top-[45px] left-1/2 -translate-x-1/2" aria-hidden="true"><circle cx="12" cy="12" r="12" fill="#16401a" /><path d="M14 17.500a6 6 0 113.500-5" stroke="#fff" strokeWidth="2.400" /><path d="M13 12.500h8.500L17.500 17z" fill="#fff" /></svg>
        </div>
        <div className="absolute top-[-1px] left-[493px] h-[451px] w-[800px] border border-[#12300f]">
          <Handle className="top-0 left-0" /><Handle className="top-0 left-1/2" />
          <Handle className="top-1/2 left-0" /><Handle className="top-1/2 left-full" />
          <Handle className="top-full left-0" /><Handle className="top-full left-1/2" /><Handle className="top-full left-full" />
        </div>
        <div className="absolute top-0 left-[909px] flex h-[37px] w-[394px] items-center gap-[15px] border border-t-0 border-[#b5b5b5] bg-[#fcfcfc] pl-[7px]">
          <AlignLeft t={BLUE} /><AlignCenter t={BLUE} /><AlignRight t={BLUE} /><AlignTop t={BLUE} /><AlignMiddle t={BLUE} />
          <span className="mr-[7px] ml-auto flex gap-[14px]">
            <Svg><rect x="1" y="1" width="11" height="13" rx="1" strokeWidth="1.300" /><rect x="7" y="7" width="11" height="12" rx="1" stroke={B} fill="#e3edfb" strokeWidth="1.300" /><path d="M14 3h2" stroke={B} strokeWidth="2" /></Svg>
            <Svg w={22}><path d="M1 16V1.500h18" stroke={L} /><path d="M13 18.500H3.500v-15h17V12" strokeWidth="1.300" /><circle cx="9" cy="8" r="2" stroke={L} /><path d="M4 16l5-4 3 2 4-4 3 3" stroke={L} /><path d="M14 17h7M17.500 13v7" stroke={B} strokeWidth="1.500" /></Svg>
          </span>
        </div>
      </div>
    </div>
  );
}

const Tri = ({ d }: { d: string }) => <svg width="8" height="8" viewBox="0 0 8 8" className="shrink-0" aria-hidden="true"><path d={d} fill="#777" /></svg>;

function VScroll() {
  return (
    <div className="flex w-5 shrink-0 flex-col items-center pt-[5px] pl-[2px]">
      <div className="h-[5px] w-3 border-y border-[#aaa]" />
      <div className="mt-[7px] flex w-4 flex-1 flex-col items-center bg-[#dcdcdc]">
        <button aria-label="向上滚动" className="flex h-6 w-4 items-center justify-center"><Tri d="M1 6h6L4 2z" /></button>
        <div className="w-4 flex-1 rounded-full border border-[#a5a5a5] bg-[#f4f4f4]" />
        <button aria-label="向下滚动" className="mt-[32px] flex h-6 w-4 items-center justify-center"><Tri d="M1 2h6L4 6z" /></button>
      </div>
    </div>
  );
}

function SheetBar() {
  const nav = ["M2 1v12M12 1L6 7l6 6", "M10 1L4 7l6 6", "M4 1l6 6-6 6", "M2 1l6 6-6 6M12 1v12"];
  return (
    <div className="flex h-[27px] shrink-0 items-stretch border-t border-[#d0d0d0] bg-[#e7e7e7]">
      <div className="flex w-[148px] items-center gap-[17px] pl-[18px]">
        {nav.map((d, i) => <button key={i} aria-label="切换工作表"><Svg w={14} h={14}><path d={d} stroke="#d8d8d8" /></Svg></button>)}
      </div>
      <button className="-mt-px w-[90px] border-x border-b border-[#cfcfcf] bg-white pt-[2px] text-[15px] font-bold text-[#3ca63d]">Sheet1</button>
      <button aria-label="新建工作表" className="ml-[6px]"><Svg w={18} h={18}><path d="M9 1v16M1 9h16" stroke="#38466a" strokeWidth="1.500" /></Svg></button>
      <div className="ml-auto flex items-center">
        <div className="h-3 w-1 border-x border-[#aaa]" />
        <div className="ml-2 flex h-[17px] w-[594px] items-center bg-[#dcdcdc] pr-[8px] pl-[7px]">
          <Tri d="M6 0v8L2 4z" />
          <div className="ml-[9px] h-[17px] flex-1 rounded-full border border-[#a5a5a5] bg-[#f4f4f4]" />
          <span className="ml-[51px]"><Tri d="M2 0v8l4-4z" /></span>
        </div>
        <div className="mr-[28px] ml-[5px] h-3 w-1 border-x border-[#aaa]" />
      </div>
    </div>
  );
}

/* ---------- side panel ---------- */
function SelectionPanel() {
  return (
    <aside className="flex w-[326px] shrink-0 flex-col border-l border-[#d6d6d6] bg-[#f0f0f0] pr-3 pl-3 text-[15px] text-[#555]">
      <div className="-ml-[3px] flex h-9 items-center pt-[2px] text-[#444]">
        <button className="flex items-center">选择窗格<Caret /></button>
        <button aria-label="固定" className="mr-[13px] ml-auto"><Svg w={18}><path d="M5.500 1.500h7l-1 7 4 2v3h-14v-3l4-2zM8.500 14v5.500" stroke="#4b5670" strokeWidth="1.400" /></Svg></button>
        <button aria-label="关闭窗格" className="-mr-1"><Svg w={16} h={16}><path d="M1.500 1.500l13 13M14.500 1.500l-13 13" stroke="#43516e" strokeWidth="1.500" /></Svg></button>
      </div>
      <h2 className="h-[36px] text-[17px] leading-9 text-[#3f9263]">文档中的对象</h2>
      <ul className="flex min-h-0 flex-1 flex-col gap-px rounded-[3px] border border-[#c4c4c4] bg-white p-[2px] pr-[14px]">
        {["图片 2", "图片 1"].map((n) => (
          <li key={n} className="flex h-[30px] shrink-0 items-center justify-between border border-[#bcbcbc] pl-[2px]">
            {n}
            <button aria-label={`显示或隐藏${n}`} className="flex h-6 w-6 items-center justify-center border border-[#c0c0c0]">
              <Svg w={18} h={14}><path d="M1 7c4-7.500 12-7.500 16 0-4 7.500-12 7.500-16 0z" strokeWidth="1.300" /><circle cx="9" cy="7" r="2.500" strokeWidth="1.300" /></Svg>
            </button>
          </li>
        ))}
      </ul>
      <div className="mt-[7px] flex h-[27px] items-center">
        叠放次序
        <button aria-label="上移" className="ml-[10px] flex h-[27px] w-[27px] items-center justify-center rounded-[2px] border border-[#c8c8c8] bg-[#fafafa]"><Svg w={12} h={14}><path d="M6 0l5 6H8v6H4V6H1z" fill={D} stroke="none" /></Svg></button>
        <button aria-label="下移" className="ml-[11px] flex h-[27px] w-[27px] items-center justify-center rounded-[2px] border border-[#c8c8c8] bg-[#fafafa]"><Svg w={12} h={14}><path d="M6 13l5-6H8V1H4v6H1z" fill="#b0b0b0" stroke="none" /></Svg></button>
      </div>
      <div className="mt-[7px] mb-[24px] flex gap-[10px]">
        <button className="h-[30px] w-[79px] rounded-[2px] border border-[#ccc] bg-white">全部显示</button>
        <button className="h-[30px] w-[79px] rounded-[2px] border border-[#ccc] bg-white">全部隐藏</button>
      </div>
    </aside>
  );
}

function ToolStrip() {
  return (
    <aside className="flex w-[55px] shrink-0 flex-col items-center bg-[#e7e7e7] pt-[13px]">
      <div className="h-[5px] w-5 border-y border-[#bbb]" />
      <button aria-label="选择" className="mt-4 flex h-[41px] w-[41px] items-center justify-center rounded-[5px] bg-[#b8b8b8]"><Svg w={16}><path d="M2 1l13 12-5 .5 2.500 5-3 1-2-5L2 18z" strokeWidth="1.400" /></Svg></button>
      <button aria-label="属性" className="mt-[15px]"><Svg><circle cx="3.500" cy="4" r="2.500" strokeWidth="1.400" /><path d="M6 4h14M0 15.500h12M17 15.500h3" strokeWidth="1.400" /><circle cx="14.500" cy="15.500" r="2.500" strokeWidth="1.400" /></Svg></button>
      <button aria-label="分析" className="mt-[25px]"><Svg><g stroke={L} strokeWidth="1.300"><rect x="1" y="1" width="3" height="3" /><rect x="7" y="1" width="12" height="3" /><rect x="1" y="7" width="3" height="12" /><path d="M8 16.500h8.500V8M10.500 14L8 16.500l2.500 2.500M14 10.500L16.500 8l2.500 2.500" /></g></Svg></button>
      <button aria-label="帮助" className="mt-[25px]"><Svg><circle cx="10" cy="10" r="9" stroke="#4b5670" strokeWidth="1.400" /><path d="M6.500 7.500c0-5 7-4.500 7-.5 0 2.500-3.500 2.500-3.500 5.500M10 14v2" stroke="#4b5670" strokeWidth="1.400" /></Svg></button>
      <div className="mt-auto h-px w-[49px] bg-[#d0d0d0]" />
      <button aria-label="更多工具" className="mt-[26px] mb-[17px]"><Svg w={20} h={8}><g stroke="#43516e" strokeWidth="1.600"><circle cx="3" cy="4" r="2" /><circle cx="10" cy="4" r="2" /><circle cx="17" cy="4" r="2" /></g></Svg></button>
    </aside>
  );
}

function StatusBar() {
  return (
    <footer className="flex h-[34px] shrink-0 items-center bg-[#f4f4f4] pr-[18px] pl-[15px] text-[15px] text-[#666]">
      <Svg><circle cx="5" cy="5" r="4" strokeWidth="1.300" /><circle cx="5" cy="5" r="1.300" /><path d="M11 3h8v4h-3v12H2v-4h13M17 3v4M5 11v4" strokeWidth="1.300" /></Svg>
      <Rule className="ml-[15px] h-[30px]" />
      <div className="ml-auto flex items-center">
        <button aria-label="护眼模式"><Svg><path d="M1 13c4-8 14-8 18 0-4 8-14 8-18 0zM10 0v3M1 2l2 3M19 2l-2 3" strokeWidth="1.300" /><ellipse cx="10" cy="13" rx="3" ry="3.500" strokeWidth="1.300" /></Svg></button>
        <button className="ml-[9px] flex items-center" aria-label="阅读模式"><Svg><path d="M7 1h6v18H7zM1 7h18v6H1z" strokeWidth="1.300" /></Svg><Caret /></button>
        <Rule className="mx-[12px] h-[30px]" />
        <button aria-label="普通视图" className="flex h-[30px] w-[29px] items-center justify-center rounded-[3px] bg-[#c0c0c0]"><Svg><path d="M.7 2h18.600v16H.7zM.7 7h18.600M.7 12h18.600M7 2v16M13 2v16" strokeWidth="1.400" /></Svg></button>
        <button aria-label="分页预览" className="ml-2"><Svg><path d="M1 2h18v16H1zM7 2v10M13 2v10M1 12h12" strokeWidth="1.300" /></Svg></button>
        <Rule className="ml-[15px] h-[30px]" />
        <button className="ml-[11px] flex items-center">100%<span className="ml-[2px]"><Caret /></span></button>
        <button aria-label="缩小" className="ml-[14px]"><Svg w={14} h={14}><path d="M1 7h12" stroke="#38466a" strokeWidth="2.500" /></Svg></button>
        <input type="range" min="0" max="100" defaultValue="49" aria-label="缩放" className="mr-[15px] ml-[13px] h-4 w-[172px] appearance-none bg-[linear-gradient(to_right,#777_50%,#bbb_50%)] bg-[length:100%_1px] bg-center bg-no-repeat [&::-webkit-slider-thumb]:h-4 [&::-webkit-slider-thumb]:w-4 [&::-webkit-slider-thumb]:appearance-none [&::-webkit-slider-thumb]:rounded-full [&::-webkit-slider-thumb]:border-2 [&::-webkit-slider-thumb]:border-[#666] [&::-webkit-slider-thumb]:bg-[#f4f4f4]" />
        <button aria-label="放大"><Svg w={14} h={14}><path d="M1 7h12M7 1v12" stroke="#38466a" strokeWidth="2.500" /></Svg></button>
        <button aria-label="全屏" className="ml-[14px]"><Svg><path d="M1 6V1h5M1 1l6 6M14 1h5v5M19 1l-6 6M1 14v5h5M1 19l6-6M19 14v5h-5M19 19l-6-6" strokeWidth="1.400" /></Svg></button>
      </div>
    </footer>
  );
}

function Arrow() {
  return (
    <svg width="273" height="586" viewBox="0 0 273 586" className="pointer-events-none absolute top-[154px] left-[1183px] z-20" aria-hidden="true">
      <path d="M2 0l19 16-5 2.500L272.300 585h-1.600L7.500 23 0 25z" fill="#fc3b39" />
    </svg>
  );
}

function Watermark() {
  return (
    <svg width="350" height="175" viewBox="0 0 350 175" className="pointer-events-none absolute right-[98px] bottom-[32px] z-20 drop-shadow-[0_0_2px_rgba(0,0,0,0.45)]" aria-hidden="true">
      <g fill="#fff" fillOpacity=".78" fontFamily="'Noto Sans','Noto Sans CJK SC',sans-serif">
        <ellipse cx="133" cy="44" rx="14" ry="17" />
        <ellipse cx="157" cy="20" rx="13" ry="18" />
        <ellipse cx="188" cy="22" rx="13" ry="17" transform="rotate(12 188 22)" />
        <ellipse cx="207" cy="52" rx="14" ry="17" />
        <path d="M169 46c12 0 18 10 26 19 8 8 18 15 16 29-3 17-19 18-42 16-20 2-38 1-41-15-2-14 10-22 17-30 8-9 12-19 24-19z" />
        <text x="0" y="109" fontSize="78" fontWeight="900" stroke="#fff" strokeOpacity=".78" strokeWidth="2">Bai</text>
        <text x="140" y="101" fontSize="46" fontWeight="700" fill="#f4f4f4" stroke="#b8b8b8" strokeWidth="1.500">du</text>
        <text x="223" y="107" fontSize="59" fontWeight="900">经验</text>
        <text x="5" y="156" fontSize="39" fontWeight="500">jingyan.baidu.com</text>
      </g>
    </svg>
  );
}

export default function App() {
  return (
    <div className="relative flex h-screen flex-col overflow-hidden bg-[#e8e8e8] font-['Noto_Sans','Noto_Sans_CJK_SC',sans-serif]">
      <TitleBar />
      <MenuBar />
      <Ribbon />
      <main className="flex min-h-0 flex-1">
        <div className="flex min-w-0 flex-1 flex-col">
          <FormulaBar />
          <div className="flex min-h-0 flex-1">
            <Grid />
            <VScroll />
          </div>
          <SheetBar />
        </div>
        <SelectionPanel />
        <ToolStrip />
      </main>
      <StatusBar />
      <Arrow />
      <Watermark />
    </div>
  );
}
